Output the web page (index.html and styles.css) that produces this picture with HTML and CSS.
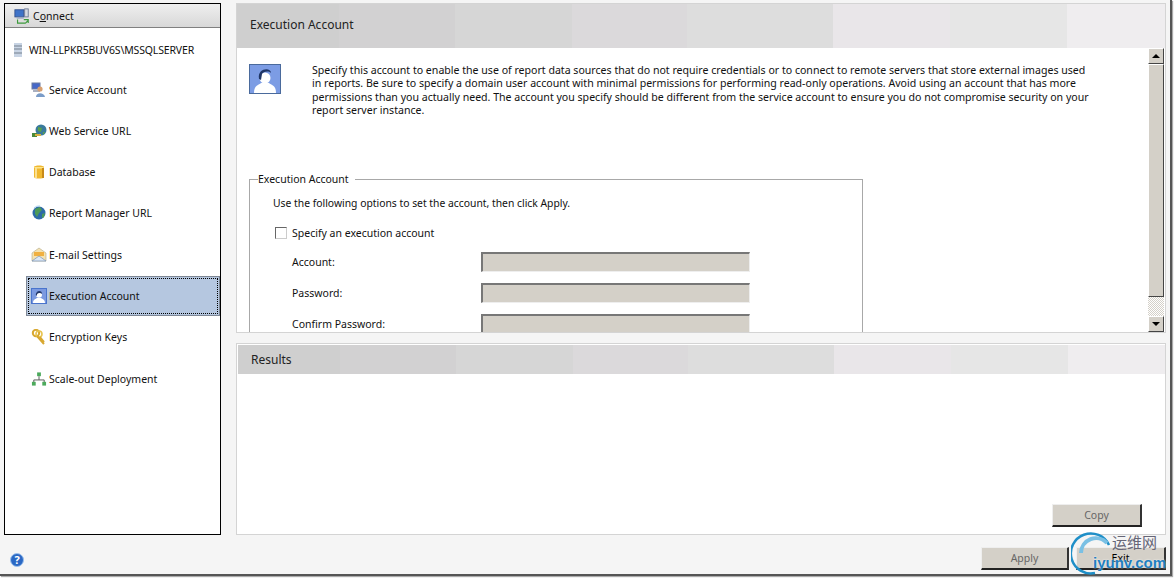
FILE: index.html
```html
<!DOCTYPE html>
<html lang="en">
<head>
<meta charset="utf-8">
<title>Reporting Services Configuration Manager</title>
<link rel="stylesheet" href="styles.css">
</head>
<body>
<div class="window">
  <div class="top">
    <aside class="nav">
      <div class="connect">
        <svg class="ico" viewBox="0 0 18 18"><rect x="1" y="2" width="10" height="8" fill="#3f73c8" stroke="#32508c"/><rect x="3" y="10" width="8" height="2" fill="#9aa8c0"/><rect x="12" y="1" width="4" height="9" fill="#d8dce4" stroke="#6a7690"/><path d="M4 13v4h9M13 17l3-3M11 13h5v4" fill="none" stroke="#3c9a3c" stroke-width="1.3"/></svg>
        <span>C<u>o</u>nnect</span>
      </div>
      <div class="server">
        <svg class="ico-s" viewBox="0 0 10 16"><rect x="1" y="1" width="8" height="14" fill="#c8d4e4"/><path d="M1 4h8M1 7h8M1 11h8" stroke="#74808e"/></svg>
        <span>WIN-LLPKR5BUV6S\MSSQLSERVER</span>
      </div>
      <ul class="items">
        <li class="item"><svg class="ico" viewBox="0 0 16 16"><rect x="1" y="1" width="8" height="6" fill="#4668c8" stroke="#6a7aa0"/><rect x="2" y="8" width="7" height="2" fill="#aab0c0"/><circle cx="9" cy="7" r="2.6" fill="#d8a070"/><path d="M5 15c0-5 8-5 9 0z" fill="#7a9cc8"/></svg>Service Account</li>
        <li class="item"><svg class="ico" viewBox="0 0 16 16"><circle cx="10" cy="7" r="5.5" fill="#3a7a9c"/><path d="M7 4l4 1-1 4-3-1zM12 9l2 0-2 3z" fill="#5ca24a"/><rect x="1" y="10" width="5" height="4" fill="#4a8a3a"/><path d="M4 12h6" stroke="#d8b040" stroke-width="2"/></svg>Web Service URL</li>
        <li class="item"><svg class="ico" viewBox="0 0 16 16"><path d="M3 3c0-2 10-2 10 0v10c0 2-10 2-10 0z" fill="#f0b830"/><path d="M3 3c0 2 10 2 10 0" fill="#fbe48a"/><rect x="4" y="4" width="2" height="10" fill="#fbe090"/><rect x="11" y="4" width="2" height="10" fill="#c88a18"/></svg>Database</li>
        <li class="item"><svg class="ico" viewBox="0 0 16 16"><circle cx="8" cy="8" r="6.5" fill="#2c6aa8"/><path d="M4 4l5-2 2 3-3 3-2 4-2-3zM11 9l3-1-1 4-2 1z" fill="#4c9a58"/><path d="M3 3a7 7 0 0 1 6-2" stroke="#a8d0f0" fill="none"/></svg>Report Manager URL</li>
        <li class="item"><svg class="ico" viewBox="0 0 16 16"><path d="M1 6l7-5 7 5v8H1z" fill="#f4e2b0" stroke="#b0a888" stroke-width=".6"/><rect x="3" y="5" width="10" height="4" fill="#f0b040"/><path d="M1 14l7-5 7 5z" fill="#dce8f4" stroke="#7a94b8" stroke-width=".7"/></svg>E-mail Settings</li>
        <li class="item selected"><svg class="ico" viewBox="0 0 16 16"><rect width="16" height="16" fill="#4a74cc"/><rect x="1" y="1" width="14" height="14" fill="#7c9ae0"/><path d="M2 15c0-4 3-4 4-5h4c1 1 4 1 4 5z" fill="#fff"/><circle cx="8" cy="6.8" r="3" fill="#fff"/><path d="M4.800 7c0-5 6.400-5 6.400-1-2-1.500-4-1-5 0l-.5 2z" fill="#22386c"/></svg>Execution Account</li>
        <li class="item"><svg class="ico" viewBox="0 0 16 16"><circle cx="5" cy="4" r="3.200" fill="none" stroke="#d8a830" stroke-width="2"/><circle cx="8" cy="5" r="3" fill="none" stroke="#e8c450" stroke-width="1.600"/><path d="M6 7l7 8M9 8l4 5" stroke="#d8a830" stroke-width="2"/></svg>Encryption Keys</li>
        <li class="item"><svg class="ico" viewBox="0 0 17 16"><path d="M8.500 5v4M3 13v-4h11v4" fill="none" stroke="#555"/><rect x="6.500" y="1" width="4" height="4" fill="#4caa5c"/><rect x="1" y="11" width="4" height="4" fill="#4caa5c"/><rect x="12" y="11" width="4" height="4" fill="#4caa5c"/></svg>Scale-out Deployment</li>
      </ul>
    </aside>
    <main class="main">
      <section class="panel config">
        <h2 class="head">Execution Account</h2>
        <div class="pane">
          <div class="content">
            <div class="intro">
              <svg class="big" viewBox="0 0 32 30"><rect x=".5" y=".5" width="31" height="29" fill="#7c9ce4" stroke="#4a6a9c"/><path d="M5 29c0-8 5-8 7-10h8c2 2 7 2 7 10z" fill="#fff"/><circle cx="16" cy="14" r="5.500" fill="#fff"/><path d="M10 15c-2-11 12-12 12-6-3-3-8-1-9 1l-1 6z" fill="#1f3566"/></svg>
              <p>Specify this account to enable the use of report data sources that do not require credentials or to connect to remote servers that store external images used<br>in reports. Be sure to specify a domain user account with minimal permissions for performing read-only operations. Avoid using an account that has more<br>permissions than you actually need. The account you specify should be different from the service account to ensure you do not compromise security on your<br>report server instance.</p>
            </div>
            <fieldset class="group">
              <legend>Execution Account</legend>
              <p class="hint">Use the following options to set the account, then click Apply.</p>
              <div class="check"><span class="box"></span>Specify an execution account</div>
              <div class="row"><span>Account:</span><span class="field"></span></div>
              <div class="row"><span>Password:</span><span class="field"></span></div>
              <div class="row"><span>Confirm Password:</span><span class="field"></span></div>
            </fieldset>
          </div>
          <div class="scrollbar">
            <span class="sbtn"><i class="up"></i></span>
            <span class="thumb"></span>
            <span class="track"></span>
            <span class="sbtn"><i class="down"></i></span>
          </div>
        </div>
      </section>
      <section class="panel results">
        <h2 class="head">Results</h2>
        <div class="log"><button class="btn">Copy</button></div>
      </section>
    </main>
  </div>
  <footer class="foot">
    <svg class="help" viewBox="0 0 14 14"><circle cx="7" cy="7" r="6.500" fill="#2a68c4" stroke="#9cc0ec"/><text x="7" y="10.500" text-anchor="middle" class="q">?</text></svg>
    <div class="actions"><button class="btn apply">Apply</button><button class="btn exit">Exit</button></div>
  </footer>
</div>
<div class="mark">
  <svg class="arc" viewBox="0 0 44 44"><path d="M38 14A20 20 0 1 0 24 42" fill="none" stroke="#1f8fc8" stroke-width="2.500"/><path d="M36 12A15 15 0 0 0 10 22" fill="none" stroke="#7ac0e4" stroke-width="4"/></svg>
  <span class="cn">运维网</span>
  <span class="en">iyunv.com</span>
</div>
</body>
</html>
```
FILE: styles.css
```css
* { box-sizing: border-box; }
html, body { margin: 0; padding: 0; background: #fff; }
body { width: 1174px; height: 578px; overflow: hidden; position: relative; font: 10.5px/14px "Noto Sans", sans-serif; color: #111; }
.window { width: 1172px; height: 576px; background: #f5f5f5; padding: 3px 5px 0 4px; border-right: 2px solid #555; border-bottom: 2px solid #555; box-shadow: 1px 1px 1px #aaa; display: flex; flex-direction: column; }
.top { display: flex; gap: 15px; height: 532px; }
.nav { width: 217px; background: #fff; border: 1px solid #000; flex: none; }
.connect { height: 24px; display: flex; align-items: center; gap: 3px; padding-left: 9px; background: linear-gradient(#efefef, #d8d8d8); border-bottom: 1px solid #808080; }
.ico { width: 16px; height: 16px; flex: none; }
.ico-s { width: 10px; height: 16px; flex: none; }
.server { height: 22px; margin: 11px 0 9.5px; padding-left: 8px; display: flex; align-items: center; gap: 6px; letter-spacing: -.15px; }
.items { list-style: none; margin: 0; padding: 0 0 0 21px; }
.item { height: 38px; margin-bottom: 3.3px; width: 193px; padding-left: 5px; display: flex; align-items: center; gap: 2px; }
.selected { height: 40px; width: 194px; margin: -1px 0 2.3px; background: #b5c7e0; border: 1px solid #7e8794; outline: 1px dotted #000; outline-offset: -3px; padding-left: 4px; }
.main { width: 930px; display: flex; flex-direction: column; gap: 10px; flex: none; }
.panel { background: #fff; border: 1px solid #d4d4d4; overflow: hidden; }
.config { height: 331px; }
.results { height: 192px; padding: 1px 0 0 1px; display: flex; flex-direction: column; }
.head { margin: 0; font: 12px/14px "Noto Sans", sans-serif; color: #222; display: flex; align-items: center; padding-left: 13px; background: linear-gradient(90deg, #cfcfcf 0 102px, #d2d1d2 102px 218px, #d6d6d6 218px 335px, #dbd9db 335px 450px, #dddddd 450px 596px, #e9e6e9 596px 713px, #e6e6e6 713px 830px, #efedef 830px 100%); }
.config .head { height: 44px; padding-bottom: 2px; }
.results .head { height: 29px; }
.pane { display: flex; height: 284px; }
.content { flex: 1; overflow: hidden; padding: 16px 0 0 12px; }
.intro { display: flex; gap: 31px; height: 108px; }
.big { width: 32px; height: 30px; flex: none; }
.intro p { margin: 0; white-space: nowrap; font-size: 10.58px; line-height: 13.4px; }
.group { width: 614px; margin: 0; padding: 10px 0 0 23px; border: 1px solid #a8a8a8; height: 240px; }
.group legend { padding: 0 6px 0 0; margin-left: -15px; line-height: 14px; }
.hint { margin: 0 0 16px; font-size: 10.35px; }
.check { display: flex; align-items: center; padding-left: 2px; gap: 5px; height: 14px; margin-bottom: 11px; }
.box { width: 12px; height: 12px; background: #fff; border: 1px solid; border-color: #666 #ccc #ccc #666; }
.row { display: grid; grid-template-columns: 189px 269px; align-items: center; padding-left: 19px; height: 21px; margin-bottom: 10px; }
.field { height: 20px; background: #d4d0c8; border: 2px solid; border-color: #777 #eee #eee #777; border-width: 2px 1px 1px 2px; }
.scrollbar { width: 16px; margin-right: 1px; display: flex; flex-direction: column; }
.sbtn { height: 16px; flex: none; background: #d4d0c8; border: 1px solid; border-color: #fff #444 #444 #fff; display: flex; align-items: center; justify-content: center; }
.up { border: 4px solid transparent; border-top: 0; border-bottom-color: #000; }
.down { border: 4px solid transparent; border-bottom: 0; border-top-color: #000; }
.thumb { height: 233px; flex: none; background: #d4d0c8; border: 1px solid; border-color: #fff #444 #444 #fff; }
.track { flex: 1; background: repeating-conic-gradient(#d4d0c8 0 25%, #fff 0 50%) 0 0 / 2px 2px; }
.log { flex: 1; display: flex; justify-content: flex-end; align-items: flex-end; padding: 0 23px 7px 0; }
.btn { width: 90px; height: 23px; padding: 0; font: 10.5px "Noto Sans", sans-serif; color: #666; background: #d4d0c8; border: 1px solid; border-color: #eee #333 #222 #eee; border-width: 1px 2px 2px 1px; }
.foot { display: flex; justify-content: space-between; align-items: flex-start; padding: 12px 0 0 6px; margin-right: -1px; }
.help { width: 14px; height: 14px; margin-top: 6px; }
.q { font: bold 11px "Noto Sans", sans-serif; fill: #fff; }
.actions { display: flex; gap: 7px; }
.apply { width: 88px; }
.exit { color: #000; }
.mark { position: absolute; left: 1068px; top: 530px; width: 106px; height: 48px; }
.arc { position: absolute; left: 3px; top: 1px; width: 44px; height: 44px; }
.cn { position: absolute; left: 44px; top: 3px; font: 15px/18px "Noto Sans CJK SC", sans-serif; color: #667; }
.en { position: absolute; left: 25px; top: 23px; font: bold 15px/20px "Liberation Sans", sans-serif; color: #1e7fc0; white-space: nowrap; text-shadow: 0 0 2px #fff; }
```
